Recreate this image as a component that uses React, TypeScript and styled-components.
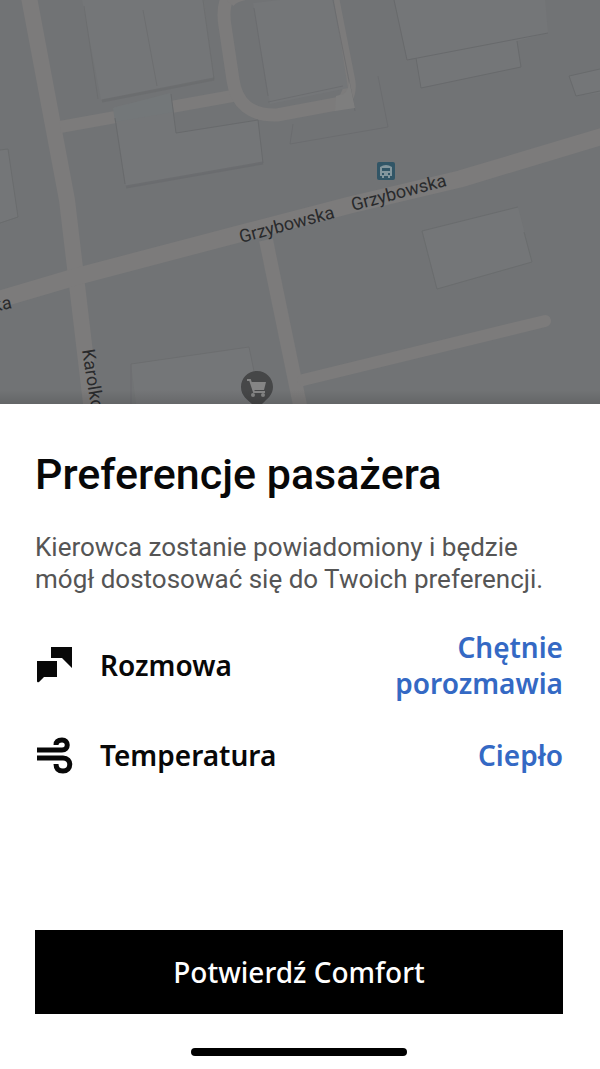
import React from "react";
import styled, { createGlobalStyle } from "styled-components";

const GlobalStyle = createGlobalStyle`
  *, *::before, *::after { box-sizing: border-box; }
  body {
    margin: 0;
    background: #fff;
    color: #080808;
    font-family: Roboto, "Noto Sans", sans-serif;
  }
`;

const Screen = styled.main`
  display: flex;
  flex-direction: column;
  min-height: 100vh;
`;

const MapArea = styled.div`
  flex: 1 0 240px;
  display: flex;
  min-height: 0;
  overflow: hidden;
  background: #717375;
`;

const MapDrawing = styled.svg`
  flex: 1;
  width: 100%;
  height: auto;
  min-height: 0;
`;

const StreetName = styled.text`
  fill: #292a2c;
  font-family: Roboto, sans-serif;
  font-size: 18px;
  font-weight: 400;
`;

const Sheet = styled.section`
  flex: none;
  display: flex;
  flex-direction: column;
  padding: 46px 37px 13px 35px;
  background: #fff;
`;

const Title = styled.h1`
  margin: 0 0 33px;
  font-size: 43px;
  font-weight: 500;
  line-height: 48px;
`;

const Description = styled.p`
  margin: 0 0 34px;
  color: #555;
  font-size: 26px;
  line-height: 32px;
`;

const Preferences = styled.div`
  display: flex;
  flex-direction: column;
  gap: 35px;
  margin-bottom: 156px;
`;

const PreferenceRow = styled.div`
  display: flex;
  align-items: center;
`;

const PreferenceIcon = styled.svg`
  flex: none;
  width: 38px;
  height: 38px;
  margin-right: 27px;
`;

const PreferenceLabel = styled.span`
  flex: 1;
  font-family: "Noto Sans", sans-serif;
  font-size: 28px;
  font-weight: 600;
  line-height: 36px;
`;

const PreferenceValue = styled.button`
  max-width: 180px;
  padding: 0;
  border: 0;
  background: none;
  color: #3469c4;
  font-family: "Noto Sans", sans-serif;
  font-size: 28px;
  font-weight: 600;
  line-height: 36px;
  text-align: right;
  cursor: pointer;
`;

const ConfirmButton = styled.button`
  height: 84px;
  border: 0;
  background: #000;
  color: #fff;
  font-family: "Noto Sans", sans-serif;
  font-size: 28px;
  font-weight: 500;
  cursor: pointer;
`;

const HomeIndicator = styled.div`
  align-self: center;
  width: 216px;
  height: 8px;
  margin-top: 34px;
  border-radius: 4px;
  background: #000;
`;

function StreetMap() {
  return (
    <MapDrawing viewBox="0 0 600 404" preserveAspectRatio="xMidYMin slice" role="img" aria-label="Mapa">
      <defs>
        <linearGradient id="edgeShade" x1="0" y1="0" x2="0" y2="1">
          <stop offset="0" stopColor="#000" stopOpacity="0" />
          <stop offset="1" stopColor="#000" stopOpacity="0.12" />
        </linearGradient>
      </defs>
      <rect width="600" height="404" fill="#717375" />

      <g fill="none" stroke="#7c7b7b" strokeLinejoin="round">
        <path d="M28 -8 L67 200 L92 412" strokeWidth="16" />
        <path d="M-10 302 L75 277 L250 231 L350 205 L460 179 L610 134" strokeWidth="17" />
        <path d="M60 127 L238 95" strokeWidth="12" />
        <path d="M228 -4 Q222 8 225 26 L233 80 Q238 116 277 115 L336 104 Q351 100 349 82 L332 -5" strokeWidth="13" />
        <path d="M230 3 Q236 -4 250 -5" strokeWidth="9" />
        <path d="M266 240 L301 410" strokeWidth="14" />
        <path d="M303 380 L545 321" strokeWidth="12" strokeLinecap="round" />
      </g>

      <g fill="#747678">
        <path d="M82 0 H204 L214 79 L101 100 Z" />
        <path d="M114 107 L171 94 L176 133 L258 120 L263 163 L126 187 Z" />
        <path d="M253 3 L333 -6 L348 88 L270 104 Z" />
        <path d="M394 -2 H545 L548 33 L517 41 L521 67 L421 88 L416 58 L407 60 Z" />
        <path d="M422 231 L518 207 L532 262 L437 289 Z" />
        <path d="M131 364 L249 347 L260 404 H136 Z" />
        <path d="M569 76 L600 69 V93 L576 96 Z" />
        <path d="M0 150 L8 149 L18 217 L0 223 Z" />
      </g>
      <path d="M113 108 L170 93 L174 112 L115 122 Z" fill="#737779" />

      <g fill="none" stroke="#686a6c" strokeWidth="1">
        <path d="M84 6 L98 99 M143 10 L157 86 M203 0 L214 79" strokeOpacity="0.65" />
        <path d="M102 101 L214 79" strokeWidth="3" strokeOpacity="0.65" />
        <path d="M171 94 L176 133 L258 120 L263 163 M115 118 L125 184" />
        <path d="M126 187 L263 163" strokeWidth="3" strokeOpacity="0.7" />
        <path d="M254 8 L268 96 M268 102 L343 86 M333 0 L355 111 M293 124 L290 144 L388 127 L378 76" strokeOpacity="0.7" />
        <path d="M394 0 L407 60 L548 33 M416 58 L421 88 L521 67 L517 41" />
        <path d="M437 289 L422 231 L518 207 M437 289 L532 262 L524 232" strokeOpacity="0.8" />
        <path d="M600 69 L569 76 L576 96 L600 91" />
        <path d="M131 404 L131 364 L249 347 L255 376" strokeOpacity="0.65" />
        <path d="M0 150 L8 149 L18 217 L0 223" strokeOpacity="0.8" />
      </g>
      <path d="M336 96 L344 94 Q350 88 349 80 L355 108 L335 111 Z" fill="#7e7e7e" />

      <StreetName transform="translate(241 243) rotate(-15)">Grzybowska</StreetName>
      <StreetName transform="translate(353 211) rotate(-15)">Grzybowska</StreetName>
      <StreetName transform="translate(-6 312) rotate(-12)">ka</StreetName>
      <StreetName transform="translate(82 350) rotate(81)">Karolkowa</StreetName>

      <rect x="377" y="162" width="18" height="18" rx="2" fill="#315566" />
      <path d="M380 167 Q386 163 392 167 V176 H390 V178 H388 V176 H384 V178 H382 V176 H380 Z" fill="#83969d" />
      <path d="M382 168 H390 V171 H382 Z M382 173 H384 V175 H382 Z M388 173 H390 V175 H388 Z" fill="#315566" />

      <path d="M257 371 C248 371 241 378 241 387 C241 396 248 400 252 404 H262 C267 399 273 395 273 387 C273 378 266 371 257 371 Z" fill="#464748" />
      <path d="M247 380 H250 L254 392 H265" fill="none" stroke="#858585" strokeWidth="2" />
      <path d="M251 382 H266 L264 390 H253 Z" fill="#858585" />
      <circle cx="253" cy="395" r="2" fill="#858585" />
      <circle cx="263" cy="395" r="2" fill="#858585" />
      <rect y="390" width="600" height="14" fill="url(#edgeShade)" />
    </MapDrawing>
  );
}

function ChatIcon() {
  return (
    <PreferenceIcon viewBox="0 0 38 38" fill="#080808" aria-hidden="true">
      <path d="M16 1 H37 V22 L27 12 H16 Z" />
      <path d="M2 15 H22 V31 H9 L4 36 Q2 37 2 35 Z" />
    </PreferenceIcon>
  );
}

function WindIcon() {
  return (
    <PreferenceIcon viewBox="0 0 38 38" fill="none" stroke="#080808" strokeWidth="5" aria-hidden="true">
      <path d="M2 14 H27 C34 14 34 4 27 4 C23 4 21 6 21 9" />
      <path d="M2 22 H28 C37 22 37 35 28 35 C24 35 21 33 21 28" />
    </PreferenceIcon>
  );
}

export default function App() {
  return (
    <>
      <GlobalStyle />
      <Screen>
        <MapArea>
          <StreetMap />
        </MapArea>
        <Sheet>
          <Title>Preferencje pasażera</Title>
          <Description>
            Kierowca zostanie powiadomiony i będzie mógł dostosować się do Twoich preferencji.
          </Description>
          <Preferences>
            <PreferenceRow>
              <ChatIcon />
              <PreferenceLabel id="talk">Rozmowa</PreferenceLabel>
              <PreferenceValue type="button" aria-describedby="talk">Chętnie porozmawia</PreferenceValue>
            </PreferenceRow>
            <PreferenceRow>
              <WindIcon />
              <PreferenceLabel id="temperature">Temperatura</PreferenceLabel>
              <PreferenceValue type="button" aria-describedby="temperature">Ciepło</PreferenceValue>
            </PreferenceRow>
          </Preferences>
          <ConfirmButton type="button">Potwierdź Comfort</ConfirmButton>
          <HomeIndicator />
        </Sheet>
      </Screen>
    </>
  );
}
